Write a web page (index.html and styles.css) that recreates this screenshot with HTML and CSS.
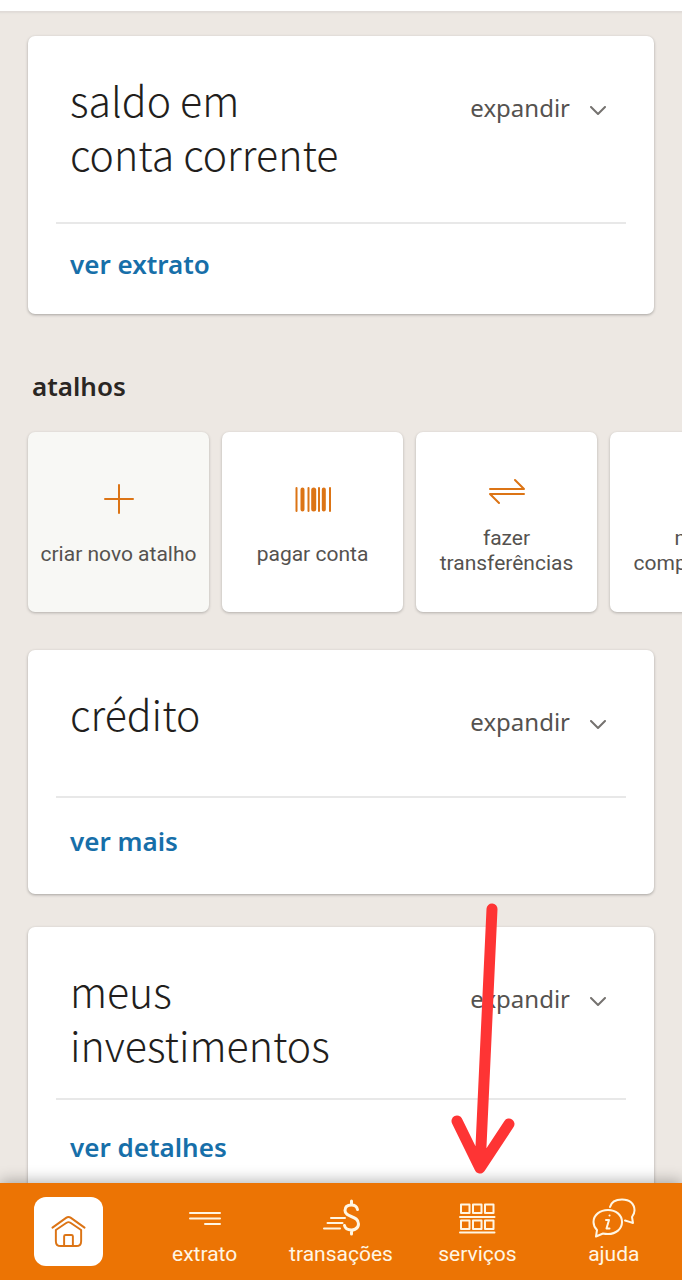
FILE: index.html
```html
<!DOCTYPE html>
<html lang="pt-BR">
<head>
    <meta charset="UTF-8">
    <meta name="viewport" content="width=device-width, initial-scale=1.0">
    <title>Início</title>
    <link rel="stylesheet" href="styles.css">
</head>
<body>
    <main class="content">
        <section class="card card-saldo">
            <div class="card-head">
                <h2 class="card-title">saldo em<br>conta corrente</h2>
                <button class="expand" type="button">
                    expandir
                    <svg class="chevron" viewBox="0 0 16 10"><path d="M1 1l7 7 7-7"/></svg>
                </button>
            </div>
            <div class="card-foot">
                <a class="card-link" href="#extrato">ver extrato</a>
            </div>
        </section>

        <section class="shortcuts">
            <h3 class="shortcuts-title">atalhos</h3>
            <div class="tiles">
                <button class="tile tile-new" type="button">
                    <svg class="tile-icon" viewBox="0 0 36 36"><path d="M18 4v28M4 18h28"/></svg>
                    <span>criar novo atalho</span>
                </button>
                <button class="tile" type="button">
                    <svg class="tile-icon" viewBox="0 0 36 36">
                        <path d="M1.500 7v23M13.500 7v23M24 7v23M35 7v23"/>
                        <path class="bar" d="M7.500 8.500v20M28.800 8.500v20"/>
                        <path class="bar-wide" d="M18.700 9v19"/>
                    </svg>
                    <span>pagar conta</span>
                </button>
                <button class="tile tile-two-lines" type="button">
                    <svg class="tile-icon" viewBox="0 0 36 36"><path d="M1 17h34l-9-9M35 22H1l9 9"/></svg>
                    <span>fazer<br>transferências</span>
                </button>
                <button class="tile tile-two-lines" type="button">
                    <svg class="tile-icon" viewBox="0 0 36 36"><path d="M6 3h24v30l-4-3-4 3-4-3-4 3-4-3-4 3zM12 12h12M12 18h12"/></svg>
                    <span>meus<br>comprovantes</span>
                </button>
            </div>
        </section>

        <section class="card card-credito">
            <div class="card-head">
                <h2 class="card-title">crédito</h2>
                <button class="expand" type="button">
                    expandir
                    <svg class="chevron" viewBox="0 0 16 10"><path d="M1 1l7 7 7-7"/></svg>
                </button>
            </div>
            <div class="card-foot">
                <a class="card-link" href="#credito">ver mais</a>
            </div>
        </section>

        <section class="card card-investimentos">
            <div class="card-head">
                <h2 class="card-title">meus<br>investimentos</h2>
                <button class="expand" type="button">
                    expandir
                    <svg class="chevron" viewBox="0 0 16 10"><path d="M1 1l7 7 7-7"/></svg>
                </button>
            </div>
            <div class="card-foot">
                <a class="card-link" href="#investimentos">ver detalhes</a>
            </div>
        </section>
    </main>

    <nav class="tabbar">
        <a class="tab tab-home" href="#inicio" aria-label="início">
            <svg class="home-icon" viewBox="0 0 36 34">
                <path d="M1.500 13L15.500 3q2.500-1.800 5 0L34.500 13"/>
                <path d="M5 15.500V27q0 5 5 5h16q5 0 5-5V15.500L20 8q-2-1.300-4 0z"/>
                <path d="M13.500 32V22q0-1.500 1.500-1.500h6q1.500 0 1.500 1.500v10"/>
            </svg>
        </a>
        <a class="tab" href="#extrato">
            <svg class="tab-icon" viewBox="0 0 44 40"><path d="M7 15h30M7 20.500h30M22 26h15"/></svg>
            extrato
        </a>
        <a class="tab" href="#transacoes">
            <svg class="tab-icon" viewBox="0 0 44 40">
                <path d="M12 20h14M8.500 25h15M5 30.500h16"/>
                <path class="thick" d="M38.500 11.500Q37.500 7 32.500 7 26 7 26 12.500C26 20 39.500 17 39.500 26 39.500 32 32.500 32 32.500 32Q26.500 32 25.500 27.500M32.500 3v4M32.500 32v4"/>
            </svg>
            transações
        </a>
        <a class="tab" href="#servicos">
            <svg class="tab-icon" viewBox="0 0 44 40">
                <path d="M6 6.500h8.500v8.500H6zM18 6.500h8.500v8.500H18zM30 6.500h8.500v8.500H30zM5 19h34.500M6 22.500h8.500V31H6zM18 22.500h8.500V31H18zM30 22.500h8.500V31H30zM5 34.500h34.500"/>
            </svg>
            serviços
            <svg class="arrow" viewBox="0 0 70 280"><path d="M44 9L32 268M9 221l23 47 29-44"/></svg>
        </a>
        <a class="tab" href="#ajuda">
            <svg class="tab-icon" viewBox="0 0 44 40">
                <path d="M18 9C19 5 23 1.500 30 1.500 38 1.500 42.500 6 42.500 12.500 42.500 15 41.500 17 40 19L41 25Q38 24 33 22.500"/>
                <path d="M4 38.500L5 32Q1.500 28.500 1.500 24C1.500 17 8 12 16 12S30 17 30 24 24 36 16 36Q13 36 11 35.500z"/>
                <path class="info" d="M17.500 17.500h.100M14 22h3l-2.500 8.500h3"/>
            </svg>
            ajuda
        </a>
    </nav>
</body>
</html>
```
FILE: styles.css
```css
* {
    box-sizing: border-box;
}

body {
    margin: 0;
    height: 100vh;
    display: flex;
    flex-direction: column;
    background: #ede8e3;
    border-top: 11px solid #fff;
    font-family: Roboto, sans-serif;
    overflow: hidden;
}

button {
    border: none;
    background: none;
    padding: 0;
    font: inherit;
    cursor: pointer;
}

a {
    text-decoration: none;
}

svg {
    fill: none;
    stroke: currentColor;
    stroke-width: 2;
    stroke-linecap: round;
    stroke-linejoin: round;
}

.content {
    flex: 1;
    min-height: 0;
    overflow: hidden;
    padding: 25px 28px 0;
    box-shadow: inset 0 4px 2px -2px #e0dbd7;
}

/* cards */
.card {
    padding: 0 28px;
    margin-bottom: 33px;
    background: #fff;
    border-radius: 7px;
    box-shadow: 0 1px 3px rgba(0,0,0,0.3);
}

.card-head {
    display: flex;
    justify-content: space-between;
    align-items: flex-start;
    padding: 36px 20px 27px 14px;
    border-bottom: 2px solid #e8e8e8;
}

.card-title {
    margin: 0;
    font-family: "Noto Sans CJK SC", "Noto Sans", sans-serif;
    font-weight: 300;
    font-size: 41px;
    line-height: 54px;
    color: #221e1c;
}

.expand {
    display: flex;
    align-items: center;
    gap: 20px;
    padding-top: 20px;
    font-family: "Noto Sans", sans-serif;
    font-size: 24px;
    line-height: 32px;
    color: #55524f;
}

.chevron {
    width: 16px;
    height: 10px;
    margin-top: 6px;
    color: #75726f;
}

.card-foot {
    padding: 21px 14px 31px;
}

.card-link {
    display: block;
    font-family: "Noto Sans", sans-serif;
    font-weight: 600;
    font-size: 26px;
    line-height: 38px;
    color: #176fa9;
}

.card-saldo .card-head {
    padding-bottom: 42px;
}

.card-credito .card-head {
    padding-bottom: 56px;
}

.card-credito .card-foot {
    padding: 24px 14px 34px;
}

.card-investimentos .card-foot {
    padding-top: 28px;
}

/* atalhos */
.shortcuts {
    margin: 53px 0 38px;
}

.shortcuts-title {
    margin: 0 0 27px 4px;
    font-family: "Noto Sans", sans-serif;
    font-weight: 600;
    font-size: 26px;
    line-height: 38px;
    color: #2a2623;
}

.tiles {
    display: flex;
    gap: 13px;
}

.tile {
    flex: none;
    display: flex;
    flex-direction: column;
    align-items: center;
    justify-content: center;
    gap: 25px;
    width: 181px;
    height: 180px;
    padding-top: 4px;
    background: #fff;
    border-radius: 7px;
    box-shadow: 0 1px 3px rgba(0,0,0,0.25);
    font-size: 21px;
    line-height: 25px;
    color: #55524f;
}

.tile-new {
    background: #f8f8f5;
}

.tile-two-lines {
    gap: 18px;
}

.tile-icon {
    width: 36px;
    height: 36px;
    color: #dc7415;
}

.bar {
    stroke-width: 4;
}

.bar-wide {
    stroke-width: 5;
}

/* barra inferior */
.tabbar {
    position: relative;
    display: flex;
    height: 97px;
    background: #ec7404;
    box-shadow: 0 -2px 14px rgba(0,0,0,0.3);
}

.tab {
    position: relative;
    flex: 1;
    display: flex;
    flex-direction: column;
    align-items: center;
    gap: 4px;
    padding-top: 15px;
    font-size: 21px;
    line-height: 25px;
    color: #fff6e4;
}

.tab-icon {
    width: 44px;
    height: 40px;
}

.thick {
    stroke-width: 3;
}

.tab-home {
    padding-top: 14px;
}

.home-icon {
    width: 69px;
    height: 69px;
    padding: 17px;
    background: #fff;
    border-radius: 12px;
    color: #dc7415;
}

.arrow {
    position: absolute;
    left: 50%;
    bottom: 100%;
    width: 70px;
    height: 280px;
    margin: 0 0 3px -29px;
    color: #fe3434;
    stroke-width: 11;
}
```
